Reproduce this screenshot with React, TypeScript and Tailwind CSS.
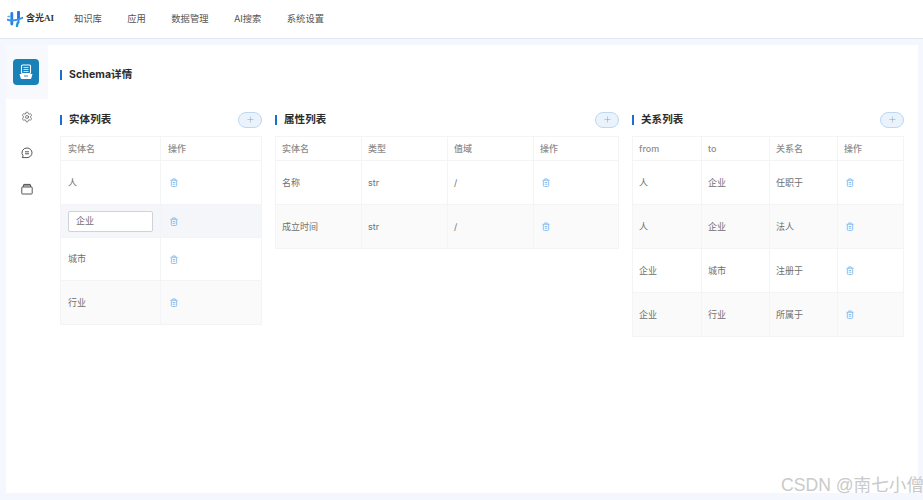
import { Plus, Settings } from 'lucide-react';

const cjk = { fontFamily: '"Inter", "Noto Sans CJK SC", sans-serif' };

// Small delete icon used in every table row
function TrashIcon() {
    return (
        <svg width="8" height="9" viewBox="0 0 18 20" fill="none" stroke="#8cc0ee" strokeWidth="2.2" className="block">
            <path d="M1 5h16" />
            <path d="M6 5V2h6v3" />
            <path d="M3 5v12a2 2 0 0 0 2 2h8a2 2 0 0 0 2-2V5" />
            <path d="M6 10h6M6 14h6" />
        </svg>
    );
}

function Logo() {
    return (
        <svg width="16" height="16" viewBox="0 0 16 16" fill="none">
            <path d="M4.8 2.5v10.5" stroke="#2f7de1" strokeWidth="2.8" strokeLinecap="round" />
            <path d="M11.5 1v7.5" stroke="#1f6fdc" strokeWidth="2.8" strokeLinecap="round" />
            <path d="M10 15c0-2 .4-3 1.5-4" stroke="#1b9ad6" strokeWidth="2.4" strokeLinecap="round" />
            <path d="M0.5 8.8c3 1 9 .5 15-2" stroke="#3b93e8" strokeWidth="2" strokeLinecap="round" />
            <path d="M1 5.5h2" stroke="#5bb4ee" strokeWidth="1.4" strokeLinecap="round" />
        </svg>
    );
}

function BadgeIcon() {
    return (
        <svg width="16" height="16" viewBox="0 0 16 16" fill="none">
            <rect x="3.5" y="1" width="9" height="8.5" rx="1" stroke="#fff" strokeWidth="1.1" />
            <path d="M5.5 3.5h5M5.5 5.5h5M5.5 7.5h5" stroke="#dbeaf5" strokeWidth="0.9" />
            <path d="M1.5 10h13l-1.2 4.2a1 1 0 0 1-1 .8H3.7a1 1 0 0 1-1-.8z" fill="#fff" />
            <path d="M6 12h4" stroke="#1a80b8" strokeWidth="0.9" />
        </svg>
    );
}

function ChatIcon() {
    return (
        <svg width="12" height="12" viewBox="0 0 12 12" fill="none" stroke="#444" strokeWidth="0.9">
            <path d="M6 1a5 4.8 0 0 1 0 9.6H1.2l1-1.6A4.8 4.8 0 0 1 6 1z" />
            <path d="M4 4.8h4M4 6.8h4" />
        </svg>
    );
}

function BoxIcon() {
    return (
        <svg width="12" height="12" viewBox="0 0 12 12" fill="none" stroke="#444" strokeWidth="0.9">
            <rect x="0.8" y="4" width="10.4" height="7" rx="0.6" />
            <path d="M2 4l.8-2.6h6.4L10 4" fill="#999" />
        </svg>
    );
}

function SectionTitle({ text }: { text: string }) {
    return (
        <div className="flex items-center gap-[7px]">
            <span className="w-[2px] h-[10px] bg-[#1b6fd0]" />
            <span className="text-[10.5px] leading-[14px] font-bold text-[#2b2b2b] tracking-[0.1px]">{text}</span>
        </div>
    );
}

function AddButton() {
    return (
        <button className="w-[24px] h-[16px] rounded-full border border-[#bcd8f3] bg-[#eaf3fc] flex items-center justify-center">
            <Plus size={9} strokeWidth={1.1} color="#6f8fab" />
        </button>
    );
}

interface Row {
    cells: string[];
    h: string;
    striped?: boolean;
    edit?: boolean;
}

function DataTable({ widths, headers, rows, pad = 'pl-[6px]', iconPad = 'pl-[8px]' }: { widths: string[]; headers: string[]; rows: Row[]; pad?: string; iconPad?: string }) {
    return (
        <div className="border border-[#f3f4f6] border-b-0">
            <div className="flex h-[24px] border-b border-[#f3f4f6]">
                {headers.map((h, i) => (
                    <div key={i} className={`${widths[i]} ${pad} shrink-0 flex items-center text-[9px] text-[#8c8c8c] font-medium border-r border-[#f3f4f6] last:border-r-0`}>
                        {h}
                    </div>
                ))}
            </div>
            {rows.map((row, r) => (
                <div key={r} className={`flex border-b border-[#f3f4f6] ${row.h} ${row.edit ? 'bg-[#f4f6f9]' : row.striped ? 'bg-[#fafafa]' : 'bg-white'}`}>
                    {row.cells.map((c, i) => (
                        <div key={i} className={`${widths[i]} ${pad} shrink-0 flex items-center text-[9px] text-[#707070] border-r border-[#f3f4f6]`}>
                            {row.edit && i === 0 ? (
                                <div className="w-[85px] h-[21px] bg-white border border-[#cfd2d8] rounded-[2px] flex items-center pl-[7px] text-[#707070]">{c}</div>
                            ) : (
                                c
                            )}
                        </div>
                    ))}
                    <div className={`flex-1 flex items-center ${iconPad}`}>
                        <TrashIcon />
                    </div>
                </div>
            ))}
        </div>
    );
}

export default function App() {
    const nav = ['知识库', '应用', '数据管理', 'AI搜索', '系统设置'];

    return (
        <div className="relative w-[923px] h-[500px] overflow-hidden bg-[#f4f7fd] flex flex-col" style={cjk}>
            {/* Top bar */}
            <header className="h-[39px] shrink-0 bg-white border-b border-[#e3e7f2] flex items-center pl-[7px]">
                <Logo />
                <span className="ml-[3px] w-[48px] text-[9px] font-bold text-[#333]" style={{ fontFamily: '"Liberation Serif", "Noto Sans CJK SC", serif' }}>含光AI</span>
                <nav className="flex gap-[25.4px] text-[9.3px] text-[#555]">
                    {nav.map((n) => (
                        <span key={n}>{n}</span>
                    ))}
                </nav>
            </header>

            <div className="flex-1 flex pt-[6px] pl-[6px] pr-[5px] pb-[7px]">
                {/* Side rail */}
                <aside className="w-[42px] shrink-0 flex flex-col">
                    <div className="h-[54px] shrink-0 bg-[#f7f9fd] flex items-center justify-center pr-[2px] pb-[1px]">
                        <div className="w-[26px] h-[26px] rounded-[4px] bg-[#1a80b8] flex items-center justify-center">
                            <BadgeIcon />
                        </div>
                    </div>
                    <div className="flex-1 bg-white flex flex-col items-center pt-[12px] gap-[24px] pr-[1px]">
                        <Settings size={12} strokeWidth={1.3} color="#444" />
                        <ChatIcon />
                        <BoxIcon />
                    </div>
                </aside>

                {/* Main panel */}
                <main className="flex-1 bg-white pl-[12px] pt-[23px]">
                    <SectionTitle text="Schema详情" />
                    <div className="flex gap-[13px] mt-[29px]">
                        <section className="w-[202px]">
                            <div className="h-[17px] mb-[8px] flex items-center justify-between">
                                <SectionTitle text="实体列表" />
                                <AddButton />
                            </div>
                            <DataTable
                                widths={['w-[100px]']}
                                headers={['实体名', '操作']}
                                pad="pl-[7px]"
                                iconPad="pl-[9px]"
                                rows={[
                                    { cells: ['人'], h: 'h-[44px]' },
                                    { cells: ['企业'], h: 'h-[33px]', edit: true },
                                    { cells: ['城市'], h: 'h-[43px]' },
                                    { cells: ['行业'], h: 'h-[44px]', striped: true },
                                ]}
                            />
                        </section>

                        <section className="w-[344px]">
                            <div className="h-[17px] mb-[8px] flex items-center justify-between">
                                <SectionTitle text="属性列表" />
                                <AddButton />
                            </div>
                            <DataTable
                                widths={['w-[86px]', 'w-[86px]', 'w-[86px]']}
                                headers={['实体名', '类型', '值域', '操作']}
                                rows={[
                                    { cells: ['名称', 'str', '/'], h: 'h-[44px]' },
                                    { cells: ['成立时间', 'str', '/'], h: 'h-[44px]', striped: true },
                                ]}
                            />
                        </section>

                        <section className="w-[272px]">
                            <div className="h-[17px] mb-[8px] flex items-center justify-between">
                                <SectionTitle text="关系列表" />
                                <AddButton />
                            </div>
                            <DataTable
                                widths={['w-[69px]', 'w-[68px]', 'w-[68px]']}
                                headers={['from', 'to', '关系名', '操作']}
                                rows={[
                                    { cells: ['人', '企业', '任职于'], h: 'h-[44px]' },
                                    { cells: ['人', '企业', '法人'], h: 'h-[44px]', striped: true },
                                    { cells: ['企业', '城市', '注册于'], h: 'h-[44px]' },
                                    { cells: ['企业', '行业', '所属于'], h: 'h-[44px]', striped: true },
                                ]}
                            />
                        </section>
                    </div>
                </main>
            </div>

            {/* Watermark */}
            <div className="absolute left-[781px] top-[473px] text-[17.6px] leading-[24px] whitespace-nowrap text-[#cacaca]" style={{ fontFamily: '"Liberation Sans", "Noto Sans CJK SC", sans-serif' }}>
                CSDN @南七小僧
            </div>
        </div>
    );
}
